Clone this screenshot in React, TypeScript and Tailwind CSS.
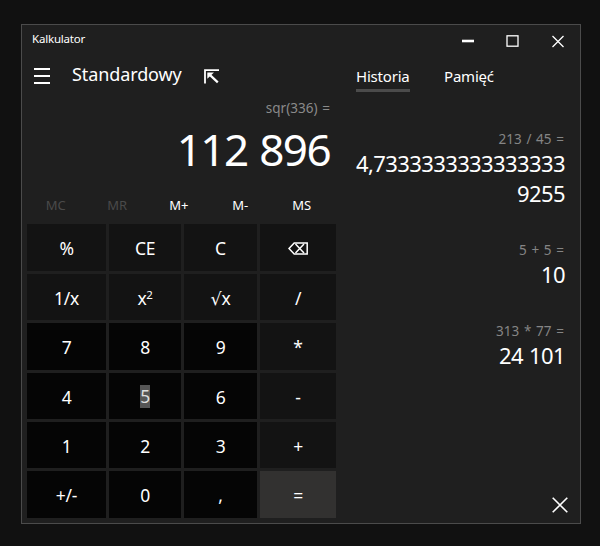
import type { ReactNode } from 'react';

type Key = { id: string; label: ReactNode; kind: 'fn' | 'num' | 'eq' };

const Backspace = () => (
  <svg width="20" height="13" viewBox="0 0 20 13" fill="none" stroke="#fff" strokeWidth="1.5">
    <path d="M1 6.5 6.2 1H19.2V12H6.2Z" />
    <path d="M7.5 2 16 11M16 2 7.5 11" />
  </svg>
);

const keys: Key[] = [
  { id: 'percent', label: '%', kind: 'fn' },
  { id: 'ce', label: 'CE', kind: 'fn' },
  { id: 'c', label: 'C', kind: 'fn' },
  { id: 'back', label: <Backspace />, kind: 'fn' },
  { id: 'inv', label: '1/x', kind: 'fn' },
  { id: 'sqr', label: <span>x<sup className="relative -top-[6px] align-baseline text-[11.5px] leading-none">2</sup></span>, kind: 'fn' },
  { id: 'sqrt', label: '√x', kind: 'fn' },
  { id: 'div', label: '/', kind: 'fn' },
  { id: '7', label: '7', kind: 'num' },
  { id: '8', label: '8', kind: 'num' },
  { id: '9', label: '9', kind: 'num' },
  { id: 'mul', label: '*', kind: 'fn' },
  { id: '4', label: '4', kind: 'num' },
  { id: '5', label: <span className="inline-block h-[23px] bg-[#565656] leading-[23px] text-[#dedede]">5</span>, kind: 'num' },
  { id: '6', label: '6', kind: 'num' },
  { id: 'sub', label: '-', kind: 'fn' },
  { id: '1', label: '1', kind: 'num' },
  { id: '2', label: '2', kind: 'num' },
  { id: '3', label: '3', kind: 'num' },
  { id: 'add', label: '+', kind: 'fn' },
  { id: 'neg', label: '+/-', kind: 'num' },
  { id: '0', label: '0', kind: 'num' },
  { id: 'comma', label: ',', kind: 'num' },
  { id: 'eq', label: '=', kind: 'eq' },
];

const keyColor = { fn: 'bg-[#131313]', num: 'bg-[#050505]', eq: 'bg-[#323130]' };

const memory = [
  { label: 'MC', color: 'text-[#4a4a4a]' },
  { label: 'MR', color: 'text-[#4a4a4a]' },
  { label: 'M+', color: 'text-white' },
  { label: 'M-', color: 'text-white' },
  { label: 'MS', color: 'text-white' },
];

const history = [
  { expr: '213 / 45 =', result: ['4,7333333333333333', '9255'] },
  { expr: '5 + 5 =', result: ['10'] },
  { expr: '313 * 77 =', result: ['24 101'] },
];

export default function App() {
  return (
    <div className="h-[546px] w-[600px] bg-[#111111] pt-[24px] pl-[21px] font-['Noto_Sans','DejaVu_Sans',sans-serif] text-white">
      <div className="flex h-[500px] w-[560px] flex-col border border-[#4b4b4b] bg-[#1f1f1f]">
        <header className="flex h-[32px] shrink-0 items-center justify-between pr-[16px] pl-[10px]">
          <span className="pb-[4px] text-[11.5px] leading-4 tracking-[-0.2px]">Kalkulator</span>
          <div className="flex items-center">
            <svg width="12" height="13" viewBox="0 0 12 13"><path d="M0 6H12" stroke="#fff" strokeWidth="2.6" /></svg>
            <svg className="ml-[32px]" width="13" height="13" viewBox="0 0 13 13"><rect x="1" y="0.8" width="11" height="10.4" fill="none" stroke="#fff" strokeWidth="1.3" /></svg>
            <svg className="ml-[33px]" width="12" height="13" viewBox="0 0 12 13"><path d="M0.5 1 11.5 12M11.5 1 0.5 12" stroke="#fff" strokeWidth="1.3" /></svg>
          </div>
        </header>
        <div className="flex flex-1">
          <main className="flex w-[314px] flex-col">
            <div className="flex h-[36px] items-start pl-[12px]">
              <svg className="mt-[11px]" width="16" height="16" viewBox="0 0 16 16" stroke="#fff" strokeWidth="2"><path d="M0 1H16M0 8H16M0 15H16" /></svg>
              <h1 className="ml-[22px] w-[118px] pt-[5px] text-[18px] leading-6 tracking-[-0.1px] whitespace-nowrap">Standardowy</h1>
              <svg className="mt-[12px] ml-[14px]" width="16" height="16" viewBox="0 0 16 16" fill="none" stroke="#fff" strokeWidth="1.8"><path d="M1 14.5V1.2H15" /><path d="M4.5 4.6 13.8 13.4" strokeWidth="2.2" /><path d="M3.3 3.5H10L3.3 9.8Z" fill="#fff" stroke="none" /></svg>
            </div>
            <p className="pt-[5px] pr-[6px] text-right text-[13.5px] leading-5 tracking-[0.05px] text-[#8a8a8a] [word-spacing:1px]">sqr(336) =</p>
            <p className="h-[68px] pt-[4px] pr-[6px] text-right text-[44px] leading-[54px] tracking-[-1.6px] whitespace-nowrap [word-spacing:2px]">112 896</p>
            <div className="flex h-[38px] items-center pt-[2px] pl-[3px] text-[13px]">
              {memory.map((m) => (
                <span key={m.label} className={`w-[61.5px] text-center ${m.color}`}>{m.label}</span>
              ))}
            </div>
            <div className="ml-[5px] grid grid-cols-[79px_72px_73px_76px] grid-rows-[47px_46px_47px_46px_46px_47px] gap-[3px]">
              {keys.map((k) => (
                <button key={k.id} className={`flex items-center justify-center pt-[1px] text-[17.5px] leading-6 tracking-[-0.3px] ${keyColor[k.kind]}`}>{k.label}</button>
              ))}
            </div>
          </main>
          <aside className="flex flex-1 flex-col">
            <nav className="flex items-start gap-[34px] pt-[9px] pl-[20px] text-[15px] leading-[21px] tracking-[-0.2px]">
              <span className="box-content h-[23px] w-[54px] border-b-[3px] border-[#4b4b4b] whitespace-nowrap">Historia</span>
              <span>Pamięć</span>
            </nav>
            <div className="mt-[37px] flex flex-1 flex-col gap-[32px] pr-[15px] text-right">
              {history.map((h) => (
                <div key={h.expr}>
                  <p className="h-[19px] pr-px text-[13.5px] leading-5 text-[#858585] [word-spacing:1.2px]">{h.expr}</p>
                  {h.result.map((line) => (
                    <p key={line} className="text-[22px] leading-[30px] tracking-[-0.6px] whitespace-nowrap [word-spacing:1px]">{line}</p>
                  ))}
                </div>
              ))}
            </div>
            <div className="flex justify-end pr-[12px] pb-[10px]">
              <svg width="16" height="16" viewBox="0 0 16 16" stroke="#fff" strokeWidth="1.6"><path d="M0.7 0.7 15.3 15.3M15.3 0.7 0.7 15.3" /></svg>
            </div>
          </aside>
        </div>
      </div>
    </div>
  );
}
